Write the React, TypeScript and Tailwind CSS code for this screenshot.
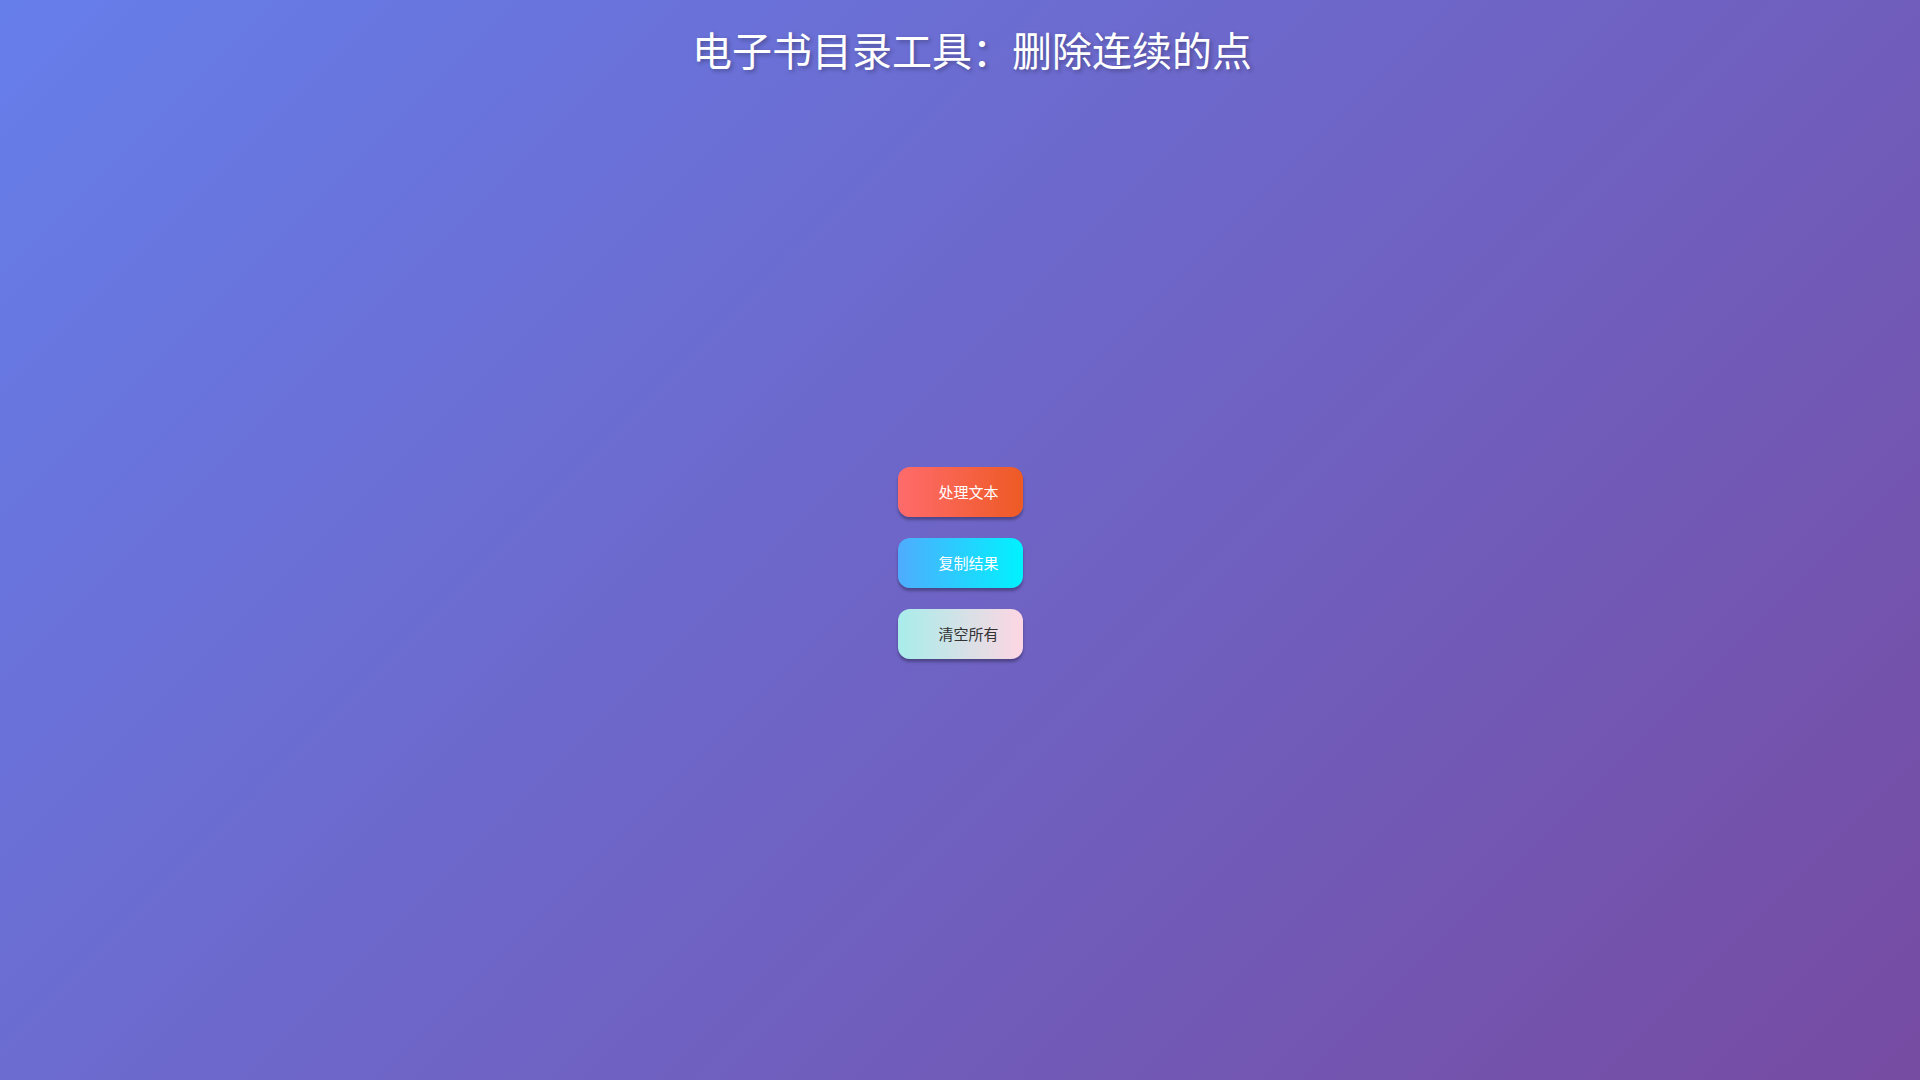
import React from "react";

const font = { fontFamily: '"Noto Sans CJK SC", "Noto Sans", sans-serif' };

export default function App() {
  return (
    <div
      className="min-h-screen w-full bg-[linear-gradient(135deg,#667eea_0%,#764ba2_100%)] flex flex-col items-center"
      style={font}
    >
      <h1 className="mt-[29px] pl-[24px] text-[40px] leading-[40px] font-normal text-white [text-shadow:2px_2px_4px_rgba(0,0,0,0.3)]">
        电子书目录工具：删除连续的点
      </h1>
      <div className="mt-[398px] flex flex-col gap-[21px]">
        <button className="w-[125px] h-[50px] rounded-[12px] pl-[17px] flex items-center justify-center text-[15px] text-white bg-[linear-gradient(90deg,#ff6b6b,#ee5a24)] shadow-[0_3px_3px_rgba(0,0,0,0.3)]">
          处理文本
        </button>
        <button className="w-[125px] h-[50px] rounded-[12px] pl-[17px] flex items-center justify-center text-[15px] text-white bg-[linear-gradient(90deg,#4facfe,#00f2fe)] shadow-[0_3px_3px_rgba(0,0,0,0.3)]">
          复制结果
        </button>
        <button className="w-[125px] h-[50px] rounded-[12px] pl-[17px] flex items-center justify-center text-[15px] text-[#333] bg-[linear-gradient(90deg,#a8edea,#fed6e3)] shadow-[0_3px_3px_rgba(0,0,0,0.3)]">
          清空所有
        </button>
      </div>
    </div>
  );
}
